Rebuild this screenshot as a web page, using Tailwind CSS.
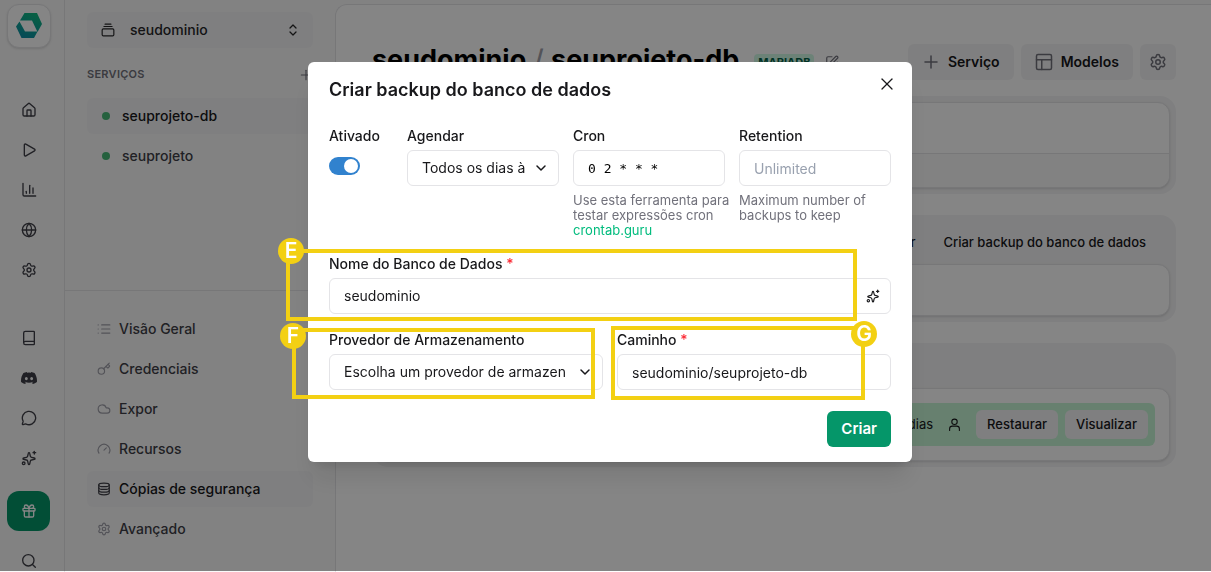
<!DOCTYPE html>
<html lang="pt-BR">
<head>
  <meta charset="UTF-8">
  <meta name="viewport" content="width=device-width, initial-scale=1.0">
  <title>Cópias de segurança</title>
  <script src="https://cdn.jsdelivr.net/npm/@tailwindcss/browser@4"></script>
</head>
<body class="h-screen overflow-hidden bg-[#fafafa] font-['Inter',sans-serif] text-sm text-zinc-900 [stroke-linecap:round] [stroke-linejoin:round]">

  <!-- Icon sprite -->
  <svg class="hidden">
    <symbol id="home" viewBox="0 0 24 24"><path d="M15 21v-8a1 1 0 0 0-1-1h-4a1 1 0 0 0-1 1v8"/><path d="M3 10a2 2 0 0 1 .709-1.528l7-5.999a2 2 0 0 1 2.582 0l7 5.999A2 2 0 0 1 21 10v9a2 2 0 0 1-2 2H5a2 2 0 0 1-2-2z"/></symbol>
    <symbol id="play" viewBox="0 0 24 24"><path d="M5 4.5a1.5 1.5 0 0 1 2.3-1.3l13 7.5a1.5 1.5 0 0 1 0 2.6l-13 7.5a1.5 1.5 0 0 1-2.3-1.3z"/></symbol>
    <symbol id="chart" viewBox="0 0 24 24"><path d="M3 2v17a2 2 0 0 0 2 2h17"/><path d="M18 17V9"/><path d="M13 17V5"/><path d="M8 17v-3"/></symbol>
    <symbol id="globe" viewBox="0 0 24 24"><circle cx="12" cy="12" r="10"/><path d="M12 2a14.5 14.5 0 0 0 0 20 14.5 14.5 0 0 0 0-20"/><path d="M2 12h20"/></symbol>
    <symbol id="gear" viewBox="0 0 24 24"><path d="M9.671 4.136a2.34 2.34 0 0 1 4.659 0 2.34 2.34 0 0 0 3.319 1.915 2.34 2.34 0 0 1 2.33 4.033 2.34 2.34 0 0 0 0 3.831 2.34 2.34 0 0 1-2.33 4.033 2.34 2.34 0 0 0-3.319 1.915 2.34 2.34 0 0 1-4.659 0 2.34 2.34 0 0 0-3.32-1.915 2.34 2.34 0 0 1-2.33-4.033 2.34 2.34 0 0 0 0-3.831A2.34 2.34 0 0 1 6.35 6.051a2.34 2.34 0 0 0 3.319-1.915"/><circle cx="12" cy="12" r="3"/></symbol>
    <symbol id="book" viewBox="0 0 24 24"><path d="M4 19.5v-15A2.5 2.5 0 0 1 6.5 2H19a1 1 0 0 1 1 1v18a1 1 0 0 1-1 1H6.5a1 1 0 0 1 0-5H20"/></symbol>
    <symbol id="discord" viewBox="0 0 24 24"><path fill="currentColor" stroke="none" d="M20.317 4.37a19.79 19.79 0 0 0-4.885-1.515.074.074 0 0 0-.079.037c-.21.375-.444.865-.608 1.25a18.27 18.27 0 0 0-5.487 0 12.64 12.64 0 0 0-.617-1.25.077.077 0 0 0-.079-.037A19.736 19.736 0 0 0 3.677 4.37a.07.07 0 0 0-.032.027C.533 9.046-.32 13.58.099 18.058a.082.082 0 0 0 .031.056 19.9 19.9 0 0 0 5.993 3.03.078.078 0 0 0 .084-.028c.462-.63.874-1.295 1.226-1.994a.076.076 0 0 0-.042-.106 13.107 13.107 0 0 1-1.872-.892.077.077 0 0 1-.008-.128l.372-.292a.074.074 0 0 1 .078-.01c3.928 1.793 8.18 1.793 12.061 0a.074.074 0 0 1 .079.009c.12.099.246.198.373.293a.077.077 0 0 1-.007.128 12.3 12.3 0 0 1-1.873.891.077.077 0 0 0-.041.107c.36.698.772 1.362 1.225 1.993a.076.076 0 0 0 .084.029 19.84 19.84 0 0 0 6.002-3.03.077.077 0 0 0 .032-.055c.5-5.177-.838-9.674-3.549-13.66a.061.061 0 0 0-.031-.028zM8.02 15.331c-1.183 0-2.157-1.086-2.157-2.419s.955-2.419 2.157-2.419c1.21 0 2.176 1.095 2.157 2.419 0 1.333-.956 2.419-2.157 2.419zm7.975 0c-1.183 0-2.157-1.086-2.157-2.419s.955-2.419 2.157-2.419c1.21 0 2.176 1.095 2.157 2.419 0 1.333-.946 2.419-2.157 2.419z"/></symbol>
    <symbol id="chat" viewBox="0 0 24 24"><path d="M2.992 16.342a2 2 0 0 1 .094 1.167l-1.065 3.29a1 1 0 0 0 1.236 1.168l3.413-.998a2 2 0 0 1 1.099.092 10 10 0 1 0-4.777-4.719"/></symbol>
    <symbol id="sparkles" viewBox="0 0 24 24"><path d="M11.017 4.814a1 1 0 0 1 1.966 0l1.051 4.558a2 2 0 0 0 1.594 1.594l4.558 1.051a1 1 0 0 1 0 1.966l-4.558 1.051a2 2 0 0 0-1.594 1.594l-1.051 4.558a1 1 0 0 1-1.966 0l-1.051-4.558a2 2 0 0 0-1.594-1.594l-4.558-1.051a1 1 0 0 1 0-1.966l4.558-1.051a2 2 0 0 0 1.594-1.594z"/><path d="M20 2v4"/><path d="M22 4h-4"/><circle cx="4" cy="20" r="2"/></symbol>
    <symbol id="gift" viewBox="0 0 24 24"><rect x="3" y="8" width="18" height="4" rx="1"/><path d="M12 8v13"/><path d="M19 12v7a2 2 0 0 1-2 2H7a2 2 0 0 1-2-2v-7"/><path d="M7.5 8a2.5 2.5 0 0 1 0-5A4.8 8 0 0 1 12 8a4.8 8 0 0 1 4.5-5 2.5 2.5 0 0 1 0 5"/></symbol>
    <symbol id="search" viewBox="0 0 24 24"><circle cx="11" cy="11" r="8.5"/><path d="m21.5 21.5-4.3-4.3"/></symbol>
    <symbol id="stack" viewBox="0 0 24 24"><path d="M7 2h10"/><path d="M5 6h14"/><rect width="20" height="12" x="2" y="10" rx="2"/></symbol>
    <symbol id="updown" viewBox="0 0 24 24"><path d="m6 16 6 6 6-6"/><path d="m6 8 6-6 6 6"/></symbol>
    <symbol id="plus" viewBox="0 0 24 24"><path d="M4 12h16"/><path d="M12 4v16"/></symbol>
    <symbol id="list" viewBox="0 0 24 24"><path d="M8 5h14"/><path d="M8 12h14"/><path d="M8 19h14"/><path d="M2 5h.01"/><path d="M2 12h.01"/><path d="M2 19h.01"/></symbol>
    <symbol id="key" viewBox="0 0 24 24"><path d="m15.5 7.5 2.3 2.3a1 1 0 0 0 1.4 0l2.1-2.1a1 1 0 0 0 0-1.4L19 4"/><path d="m21 2-9.6 9.6"/><circle cx="7.5" cy="15.5" r="5.5"/></symbol>
    <symbol id="cloud" viewBox="0 0 24 24"><path d="M17.5 19H9a7 7 0 1 1 6.71-9h1.79a4.5 4.5 0 1 1 0 9Z"/></symbol>
    <symbol id="gauge" viewBox="0 0 24 24"><path d="m12 14 4-4"/><path d="M3.34 19a10 10 0 1 1 17.32 0"/></symbol>
    <symbol id="database" viewBox="0 0 24 24"><ellipse cx="12" cy="5" rx="9" ry="3"/><path d="M3 5v14a9 3 0 0 0 18 0V5"/><path d="M3 9.7a9 3 0 0 0 18 0"/><path d="M3 14.4a9 3 0 0 0 18 0"/></symbol>
    <symbol id="layout" viewBox="0 0 24 24"><rect width="20" height="20" x="2" y="2" rx="2"/><path d="M2 9h20"/><path d="M9 22V9"/></symbol>
    <symbol id="edit" viewBox="0 0 24 24"><path d="M12 3H5a2 2 0 0 0-2 2v14a2 2 0 0 0 2 2h14a2 2 0 0 0 2-2v-7"/><path d="M18.375 2.625a1 1 0 0 1 3 3l-9.013 9.014a2 2 0 0 1-.853.505l-2.873.84a.5.5 0 0 1-.62-.62l.84-2.873a2 2 0 0 1 .506-.852z"/></symbol>
    <symbol id="user" viewBox="0 0 24 24"><circle cx="12" cy="7" r="5"/><path d="M3 23v-3a5 5 0 0 1 5-5h8a5 5 0 0 1 5 5v3"/></symbol>
    <symbol id="chevron" viewBox="0 0 24 24"><path d="m4 8 8 8 8-8"/></symbol>
    <symbol id="close" viewBox="0 0 24 24"><path d="M22 2 2 22"/><path d="m2 2 20 20"/></symbol>
  </svg>

  <div class="flex h-full">
    <!-- Icon rail -->
    <nav class="flex w-[65px] shrink-0 flex-col border-r border-zinc-200 pl-[7px] pt-1 text-zinc-700">
      <a href="#" aria-label="Início" class="flex h-11 w-11 shrink-0 items-center justify-center rounded-xl border border-zinc-200 bg-white shadow-sm">
        <svg class="h-[26px] w-[26px]" viewBox="0 0 26 26">
          <defs>
            <linearGradient id="logo" gradientUnits="userSpaceOnUse" x1="8" y1="25" x2="18" y2="0">
              <stop offset="0" stop-color="#0e8fa7"/>
              <stop offset="1" stop-color="#10b981"/>
            </linearGradient>
          </defs>
          <path fill="url(#logo)" d="M8.5 0h12.5l5 11-4.500 8-5.500-11.500H4z"/>
          <path fill="url(#logo)" d="M3.500 8.500 9 18.500h12.500L18 25H5.500L0 13.500z"/>
        </svg>
      </a>
      <div class="mt-[42px] flex w-11 shrink-0 flex-col">
        <a href="#" aria-label="Painel" class="flex h-10 items-center justify-center"><svg class="h-4 w-4 fill-none stroke-current stroke-2"><use href="#home"/></svg></a>
        <a href="#" aria-label="Ações" class="flex h-10 items-center justify-center"><svg class="h-4 w-4 fill-none stroke-current stroke-2"><use href="#play"/></svg></a>
        <a href="#" aria-label="Monitor" class="flex h-10 items-center justify-center"><svg class="h-4 w-4 fill-none stroke-current stroke-2"><use href="#chart"/></svg></a>
        <a href="#" aria-label="Domínios" class="flex h-10 items-center justify-center"><svg class="h-4 w-4 fill-none stroke-current stroke-2"><use href="#globe"/></svg></a>
        <a href="#" aria-label="Configurações" class="flex h-10 items-center justify-center"><svg class="h-4 w-4 fill-none stroke-current stroke-2"><use href="#gear"/></svg></a>
      </div>
      <div class="mt-7 flex w-11 shrink-0 flex-col">
        <a href="#" aria-label="Documentação" class="flex h-10 items-center justify-center"><svg class="h-4 w-4 fill-none stroke-current stroke-2"><use href="#book"/></svg></a>
        <a href="#" aria-label="Discord" class="flex h-10 items-center justify-center"><svg class="h-4 w-4 fill-none stroke-current stroke-2"><use href="#discord"/></svg></a>
        <a href="#" aria-label="Suporte" class="flex h-10 items-center justify-center"><svg class="h-4 w-4 fill-none stroke-current stroke-2"><use href="#chat"/></svg></a>
        <a href="#" aria-label="Novidades" class="flex h-10 items-center justify-center"><svg class="h-4 w-4 fill-none stroke-current stroke-2"><use href="#sparkles"/></svg></a>
      </div>
      <button aria-label="Presentes" class="mt-[13px] flex h-10 w-[43px] shrink-0 items-center justify-center rounded-xl bg-[#059669] text-white"><svg class="h-4 w-4 fill-none stroke-current stroke-2"><use href="#gift"/></svg></button>
      <button aria-label="Buscar" class="mt-[10px] flex h-10 w-11 shrink-0 items-center justify-center"><svg class="h-4 w-4 fill-none stroke-current stroke-2"><use href="#search"/></svg></button>
    </nav>

    <!-- Sidebar -->
    <aside class="flex w-[270px] shrink-0 flex-col pt-3 font-medium text-zinc-700">
      <div class="flex h-[278px] flex-col px-[22px]">
        <button class="flex h-9 shrink-0 items-center rounded-md bg-zinc-100 px-[14px] text-zinc-800">
          <svg class="h-[14px] w-[14px] fill-none stroke-current stroke-2"><use href="#stack"/></svg>
          <span class="ml-[15px] flex-1 text-left">seudominio</span>
          <svg class="h-3 w-3 fill-none stroke-current stroke-[2.5]"><use href="#updown"/></svg>
        </button>
        <div class="mt-[18px] flex h-[18px] items-center justify-between text-zinc-500">
          <h2 class="text-[11px] font-semibold tracking-wide">SERVIÇOS</h2>
          <button aria-label="Novo serviço"><svg class="h-[14px] w-[14px] fill-none stroke-current stroke-2"><use href="#plus"/></svg></button>
        </div>
        <div class="mt-[14px] flex flex-col gap-1">
          <a href="#" class="flex h-9 items-center gap-3 rounded-md bg-zinc-100 px-[15px] text-zinc-900"><span class="h-2 w-2 rounded-full bg-[#48bb78]"></span>seuprojeto-db</a>
          <a href="#" class="flex h-9 items-center gap-3 rounded-md px-[15px]"><span class="h-2 w-2 rounded-full bg-[#48bb78]"></span>seuprojeto</a>
        </div>
      </div>
      <div class="flex flex-col gap-1 border-t border-zinc-200 px-[22px] pt-5">
        <a href="#" class="flex h-9 items-center gap-2 rounded-md px-[10px]"><svg class="h-[14px] w-[14px] fill-none stroke-zinc-400 stroke-2"><use href="#list"/></svg>Visão Geral</a>
        <a href="#" class="flex h-9 items-center gap-2 rounded-md px-[10px]"><svg class="h-[14px] w-[14px] fill-none stroke-zinc-400 stroke-2"><use href="#key"/></svg>Credenciais</a>
        <a href="#" class="flex h-9 items-center gap-2 rounded-md px-[10px]"><svg class="h-[14px] w-[14px] fill-none stroke-zinc-400 stroke-2"><use href="#cloud"/></svg>Expor</a>
        <a href="#" class="flex h-9 items-center gap-2 rounded-md px-[10px]"><svg class="h-[14px] w-[14px] fill-none stroke-zinc-400 stroke-2"><use href="#gauge"/></svg>Recursos</a>
        <a href="#" class="flex h-9 items-center gap-2 rounded-md bg-zinc-100 px-[10px] text-zinc-900"><svg class="h-[14px] w-[14px] fill-none stroke-zinc-700 stroke-2"><use href="#database"/></svg>Cópias de segurança</a>
        <a href="#" class="flex h-9 items-center gap-2 rounded-md px-[10px]"><svg class="h-[14px] w-[14px] fill-none stroke-zinc-400 stroke-2"><use href="#gear"/></svg>Avançado</a>
      </div>
    </aside>

    <!-- Content -->
    <main class="mt-1 flex min-w-0 flex-1 flex-col rounded-tl-xl border-l border-t border-zinc-200 bg-white pl-9 pr-[35px] pt-[39px]">
      <header class="flex h-9 items-center gap-[7px]">
        <h1 class="whitespace-nowrap pb-1 text-[27px] font-bold text-black">seudominio <span class="px-px font-medium text-zinc-400">/</span> seuprojeto-db</h1>
        <span class="ml-2 rounded-sm bg-emerald-100 px-1 text-[11px] font-bold leading-4 text-emerald-800">MARIADB</span>
        <button aria-label="Renomear" class="ml-1 text-zinc-500"><svg class="h-[14px] w-[14px] fill-none stroke-current stroke-2"><use href="#edit"/></svg></button>
        <div class="flex-1"></div>
        <button class="flex h-9 items-center gap-2 rounded-md bg-zinc-100 px-[14px] font-semibold"><svg class="h-[18px] w-[18px] fill-none stroke-zinc-500 stroke-2"><use href="#plus"/></svg>Serviço</button>
        <button class="flex h-9 items-center gap-2 rounded-md bg-zinc-100 px-[14px] font-semibold"><svg class="h-[18px] w-[18px] fill-none stroke-zinc-500 stroke-2"><use href="#layout"/></svg>Modelos</button>
        <button aria-label="Configurações" class="flex h-9 w-9 items-center justify-center rounded-md bg-zinc-100"><svg class="h-[18px] w-[18px] fill-none stroke-zinc-500 stroke-2"><use href="#gear"/></svg></button>
      </header>

      <section class="mt-4 rounded-2xl bg-zinc-100 p-[6px]">
        <div class="rounded-xl border border-zinc-200 bg-white shadow-sm">
          <div class="h-[50px]"></div>
          <div class="h-[34px] rounded-b-xl border-t border-zinc-200 bg-[#fafafa]"></div>
        </div>
      </section>

      <section class="mt-[21px] rounded-2xl bg-zinc-100 p-[6px]">
        <div class="flex h-[43px] items-center justify-end gap-7 px-6 text-[13px] font-medium">
          <button>Restaurar</button>
          <button>Criar backup do banco de dados</button>
        </div>
        <div class="h-[52px] rounded-xl border border-zinc-200 bg-white shadow-sm"></div>
      </section>

      <section class="mt-[21px] rounded-2xl bg-zinc-100 p-[6px]">
        <div class="h-[39px]"></div>
        <div class="rounded-xl border border-zinc-200 bg-white p-[14px] shadow-sm">
          <div class="flex h-[43px] items-center justify-end gap-[7px] rounded-md bg-[#c6f6d5] px-[7px] text-[13px] font-medium">
            <span class="font-normal">há 2 dias</span>
            <svg class="mx-2 h-[13px] w-[13px] fill-none stroke-current stroke-2"><use href="#user"/></svg>
            <button class="h-[29px] rounded-md bg-zinc-100 px-[11px]">Restaurar</button>
            <button class="h-[29px] rounded-md bg-zinc-100 px-[11px]">Visualizar</button>
          </div>
        </div>
      </section>
    </main>
  </div>

  <!-- Modal -->
  <div class="fixed inset-x-0 bottom-px top-0 flex items-start justify-center bg-black/48 pl-[9px] pt-[62px]">
    <form class="relative w-[604px] rounded-md bg-white px-[21px] pb-[15px] pt-4 shadow-xl">
      <h2 class="text-[18px] font-semibold leading-6">Criar backup do banco de dados</h2>
      <button type="button" aria-label="Fechar" class="absolute right-[18px] top-[15px] p-px"><svg class="h-3 w-3 fill-none stroke-current stroke-[2.5]"><use href="#close"/></svg></button>

      <div class="mt-6 grid grid-cols-[64px_1fr_1fr_1fr] gap-[14px]">
        <div>
          <label for="enabled" class="block font-medium leading-5">Ativado</label>
          <input id="enabled" type="checkbox" checked class="mt-[11px] block h-[18px] w-[31px] appearance-none rounded-full bg-zinc-300 p-[2px] before:block before:h-[14px] before:w-[14px] before:rounded-full before:bg-white checked:bg-[#3182ce] checked:before:ml-[13px]">
        </div>
        <div>
          <label for="schedule" class="mb-1 block font-medium leading-5">Agendar</label>
          <div class="relative">
            <select id="schedule" class="h-9 w-full appearance-none rounded-md border border-zinc-200 bg-white pl-[14px] pr-[33px]">
              <option>Todos os dias às 2:00</option>
            </select>
            <svg class="pointer-events-none absolute right-3 top-3 h-3 w-3 fill-none stroke-current stroke-3"><use href="#chevron"/></svg>
          </div>
        </div>
        <div>
          <label for="cron" class="mb-1 block font-medium leading-5">Cron</label>
          <input id="cron" type="text" value="0 2 * * *" class="h-9 w-full rounded-md border border-zinc-200 px-[14px] font-['DejaVu_Sans_Mono',monospace] text-[13px] text-black">
          <p class="-mr-2 mt-[7px] text-[13px] leading-[15px] text-zinc-500">Use esta ferramenta para testar expressões cron <a href="#" class="block text-emerald-500">crontab.guru</a></p>
        </div>
        <div>
          <label for="retention" class="mb-1 block font-medium leading-5">Retention</label>
          <input id="retention" type="text" placeholder="Unlimited" class="h-9 w-full rounded-md border border-zinc-200 px-[14px] placeholder:text-gray-400">
          <p class="mt-[7px] text-[13px] leading-[15px] text-zinc-500">Maximum number of backups to keep</p>
        </div>
      </div>

      <div class="mt-4">
        <label for="dbname" class="mb-1 block font-medium leading-5">Nome do Banco de Dados <span class="text-red-500">*</span></label>
        <div class="flex h-9 rounded-md border border-zinc-200">
          <input id="dbname" type="text" value="seudominio" class="min-w-0 flex-1 px-[14px]">
          <button type="button" aria-label="Gerar nome" class="flex w-[34px] items-center justify-center"><svg class="h-[14px] w-[14px] fill-none stroke-current stroke-2"><use href="#sparkles"/></svg></button>
        </div>
      </div>

      <div class="mt-4 grid grid-cols-2 gap-[14px]">
        <div>
          <label for="provider" class="mb-1 block font-medium leading-5">Provedor de Armazenamento</label>
          <div class="relative">
            <select id="provider" class="h-9 w-full appearance-none rounded-md border border-zinc-200 bg-white pl-[14px] pr-[37px]">
              <option>Escolha um provedor de armazenamento</option>
            </select>
            <svg class="pointer-events-none absolute right-3 top-3 h-3 w-3 fill-none stroke-current stroke-3"><use href="#chevron"/></svg>
          </div>
        </div>
        <div>
          <label for="path" class="mb-1 block font-medium leading-5">Caminho <span class="text-red-500">*</span></label>
          <input id="path" type="text" value="seudominio/seuprojeto-db" class="h-9 w-full rounded-md border border-zinc-200 px-[14px]">
        </div>
      </div>

      <div class="mt-[21px] flex justify-end">
        <button type="submit" class="h-9 rounded-md bg-[#059669] px-[14px] text-[15px] font-semibold text-white">Criar</button>
      </div>

      <!-- Callouts -->
      <div class="pointer-events-none absolute left-[-22px] top-[187px] h-[72px] w-[571px] border-4 border-[#f3d013]">
        <span class="absolute left-[-12px] top-[-15px] flex h-[26px] w-[26px] items-center justify-center rounded-full bg-[#f3d013] text-[21px] font-semibold text-white">E</span>
      </div>
      <div class="pointer-events-none absolute left-[-16px] top-[266px] h-[71px] w-[303px] border-4 border-[#f3d013]">
        <span class="absolute left-[-16px] top-[-9px] flex h-[26px] w-[26px] items-center justify-center rounded-full bg-[#f3d013] text-[21px] font-semibold text-white">F</span>
      </div>
      <div class="pointer-events-none absolute left-[303px] top-[264px] h-[74px] w-[254px] border-4 border-[#f3d013]">
        <span class="absolute right-[-16px] top-[-9px] flex h-[26px] w-[26px] items-center justify-center rounded-full bg-[#f3d013] text-[21px] font-semibold text-white">G</span>
      </div>
    </form>
  </div>
</body>
</html>
